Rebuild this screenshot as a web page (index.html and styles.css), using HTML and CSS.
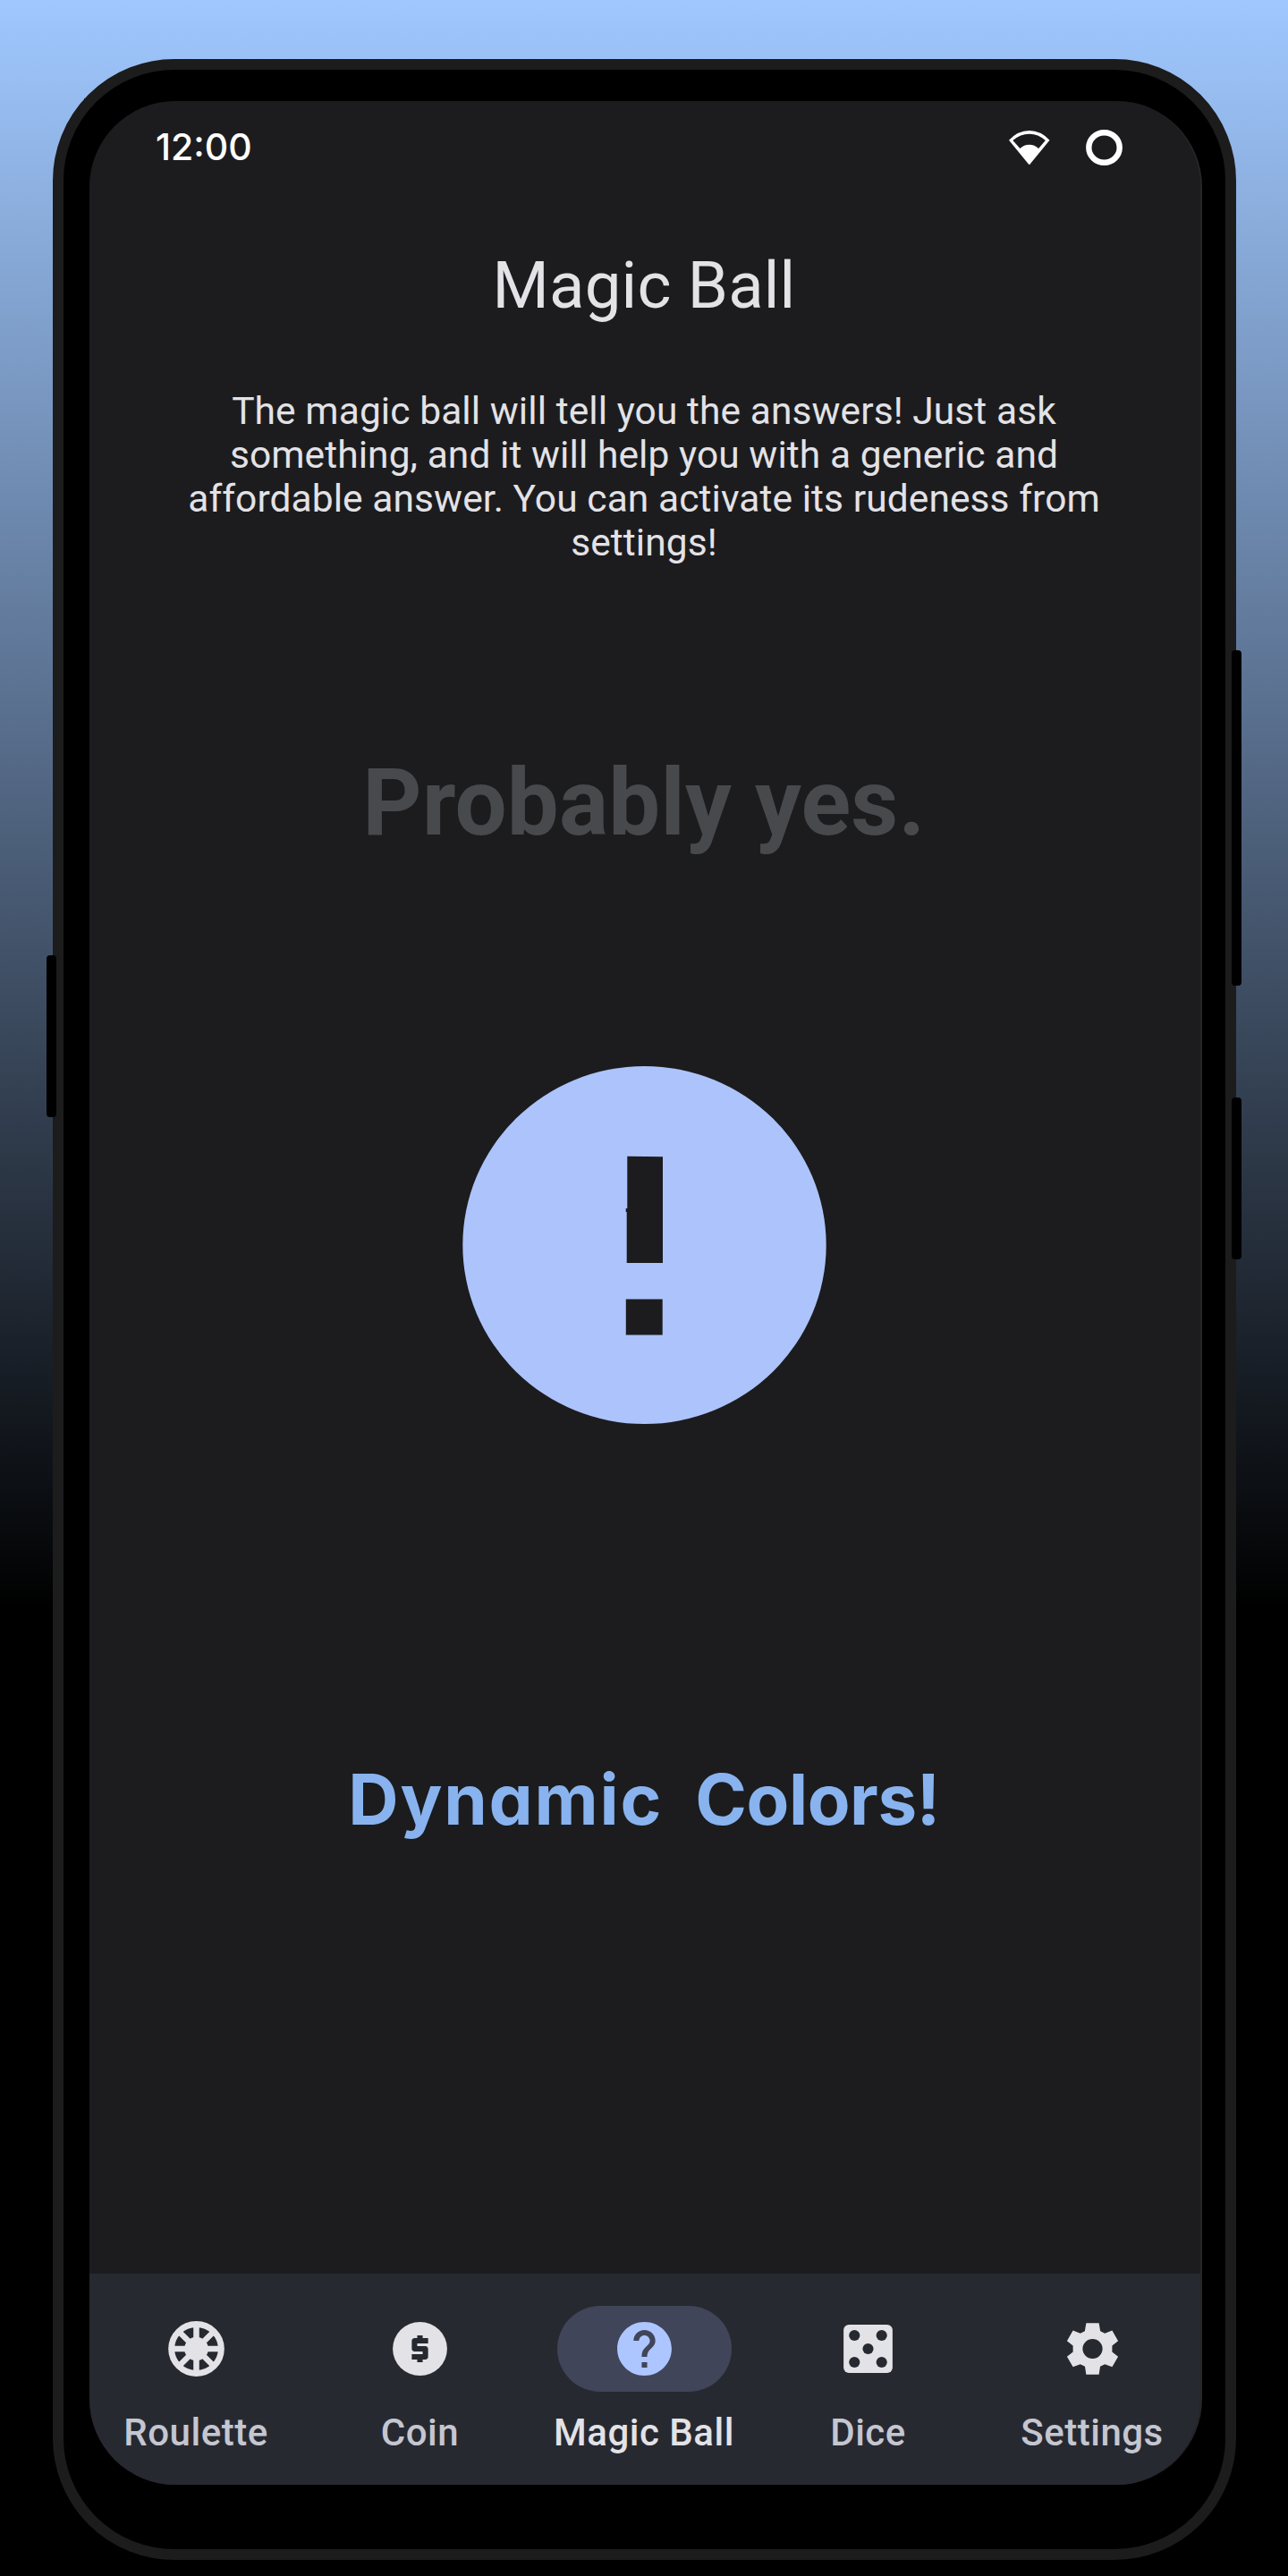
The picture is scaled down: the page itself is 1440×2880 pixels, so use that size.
FILE: index.html
```html
<!DOCTYPE html>
<html lang="en">
<head>
<meta charset="utf-8">
<title>Magic Ball</title>
<link rel="stylesheet" href="styles.css">
</head>
<body>
<div class="phone">
  <span class="key key-left"></span>
  <span class="key key-volume"></span>
  <span class="key key-power"></span>
  <div class="screen">
    <header class="status">
      <span class="clock">12:00</span>
      <div class="status-icons">
        <svg class="wifi" viewBox="0 0 136 115"><path fill="#fff" fill-rule="evenodd" d="M0 32Q30 0 68 0T136 32L68 115ZM13 33L37 60Q50 47 68 47T99 60L122 33Q98 11 68 11T13 33Z"/></svg>
        <svg class="ring" viewBox="0 0 41 40"><ellipse cx="20.5" cy="20" rx="17.2" ry="16.8" fill="none" stroke="#fff" stroke-width="6.4"/></svg>
      </div>
    </header>
    <main class="content">
      <h1 class="title">Magic Ball</h1>
      <p class="description">The magic ball will tell you the answers! Just ask<br>something, and it will help you with a generic and<br>affordable answer. You can activate its rudeness from<br>settings!</p>
      <p class="answer">Probably yes.</p>
      <svg class="ball" viewBox="0 0 407 400">
        <ellipse cx="203.5" cy="200" rx="203.2" ry="200" fill="#adc3fb"/>
        <path fill="#1c1c1e" d="M184.3 100.7L224 101.3V220H183.7V163H182.7V159H184.3ZM182.8 260.5H223.7V300.5H182.8Z"/>
      </svg>
      <p class="promo"><span class="promo-first">Dynamic</span><span class="promo-second">Colors!</span></p>
    </main>
    <nav class="tabs">
      <div class="tab">
        <span class="pill"><svg class="icon" viewBox="0 0 24 24" preserveAspectRatio="none"><g fill="none" stroke="#e3e2e6" stroke-width="2.15"><circle cx="12" cy="12" r="9.15" stroke-width="2.3"/><path d="M12 3V21M3 12H21M5.6 5.6L18.4 18.4M18.4 5.6L5.6 18.4"/></g><circle cx="12" cy="12" r="4.4" fill="#e3e2e6"/></svg></span>
        <span class="label">Roulette</span>
      </div>
      <div class="tab">
        <span class="pill"><svg class="icon" viewBox="0 0 24 24" preserveAspectRatio="none"><circle cx="12" cy="12" r="10" fill="#e3e2e6"/><path fill="#272930" d="M11 17h2v-1h1c.55 0 1-.45 1-1v-3c0-.55-.45-1-1-1h-3v-1h4V8h-2V7h-2v1h-1c-.55 0-1 .45-1 1v3c0 .55.45 1 1 1h3v1H9v2h2z"/></svg></span>
        <span class="label">Coin</span>
      </div>
      <div class="tab tab-active">
        <span class="pill"><svg class="icon" viewBox="0 0 24 24" preserveAspectRatio="none"><path fill="#adc6ff" d="M12 2C6.48 2 2 6.48 2 12s4.48 10 10 10 10-4.48 10-10S17.52 2 12 2zm1 17h-2v-2h2v2zm2.07-7.75l-.9.92C13.45 12.9 13 13.5 13 15h-2v-.5c0-1.1.45-2.1 1.17-2.83l1.24-1.26c.37-.36.59-.86.59-1.41 0-1.1-.9-2-2-2s-2 .9-2 2H8c0-2.21 1.79-4 4-4s4 1.79 4 4c0 .88-.36 1.68-.93 2.25z"/></svg></span>
        <span class="label">Magic Ball</span>
      </div>
      <div class="tab">
        <span class="pill"><svg class="icon" viewBox="0 0 24 24" preserveAspectRatio="none"><rect x="3" y="3" width="18" height="18" rx="2" fill="#e3e2e6"/><g fill="#272930"><circle cx="7" cy="7" r="2"/><circle cx="17" cy="7" r="2"/><circle cx="12" cy="12" r="2"/><circle cx="7" cy="17" r="2"/><circle cx="17" cy="17" r="2"/></g></svg></span>
        <span class="label">Dice</span>
      </div>
      <div class="tab">
        <span class="pill"><svg class="icon" viewBox="0 0 24 24" preserveAspectRatio="none"><path fill="#e3e2e6" fill-rule="evenodd" d="M9.65 2.4H14.35L14.85 5.4L16.5 6.25L19.2 5.2L21.4 9.1L19.2 10.8V13.2L21.4 14.9L19.2 18.75L16.5 17.75L14.8 18.6L14.35 21.6H9.65L9.2 18.6L7.5 17.75L4.8 18.75L2.6 14.9L4.8 13.2V10.8L2.6 9.1L4.8 5.2L7.5 6.25L9.15 5.4ZM12 8.35A3.65 3.65 0 1 0 12 15.65A3.65 3.65 0 1 0 12 8.35Z"/></svg></span>
        <span class="label">Settings</span>
      </div>
    </nav>
  </div>
</div>
</body>
</html>
```

FILE: styles.css
```css
* { box-sizing: border-box; }

body {
  margin: 0;
  height: 2880px;
  padding: 66px 58px 18px 59px;
  background: #000 linear-gradient(180deg, #a0c8ff 0, #000 1800px) no-repeat;
  font-family: Roboto, "Liberation Sans", sans-serif;
  isolation: isolate;
}

h1, p { margin: 0; font-weight: 400; }

.phone {
  position: relative;
  height: 2796px;
  padding: 35px 26.5px 72px 28.5px;
  border: 12px solid #1c1c1c;
  border-radius: 136px;
  background: #000;
}

/* Squared shoulders that show just past the rounded body */
.phone::before {
  content: "";
  position: absolute;
  z-index: -1;
  top: 32px;
  left: 23px;
  right: 24px;
  height: 60px;
  background: #1c1c1c;
}

.key {
  position: absolute;
  width: 11px;
  border-radius: 4px;
  background: #000;
}

.key-left { left: -19px; top: 990px; height: 181px; }
.key-volume { right: -18px; top: 649px; height: 375px; }
.key-power { right: -18px; top: 1149px; height: 181px; }

.screen {
  display: flex;
  flex-direction: column;
  height: 2665px;
  overflow: hidden;
  border-right: 2px solid #262628;
  border-radius: 96px;
  background: #1c1c1e;
}

.status {
  display: flex;
  align-items: center;
  justify-content: space-between;
  height: 104px;
  padding: 0 86.5px 0 74.5px;
  color: #fff;
}

.clock {
  margin-top: -2px;
  font: 500 41px/50px Inter, Roboto, sans-serif;
}

.status-icons { display: flex; align-items: center; gap: 40.5px; }
.wifi { width: 45.5px; height: 38.5px; }
.ring { width: 41px; height: 40px; }

.content {
  display: flex;
  flex: 1;
  flex-direction: column;
  align-items: center;
  padding: 61px 1px 0 0;
  color: #e3e2e6;
  text-align: center;
  white-space: nowrap;
}

.title { font-size: 72.5px; line-height: 84px; letter-spacing: .2px; }

.description {
  margin-top: 73px;
  font-size: 42.5px;
  line-height: 49px;
  letter-spacing: .08px;
}

.answer {
  margin-top: 207px;
  font-size: 103px;
  line-height: 120px;
  font-weight: 700;
  letter-spacing: .25px;
  color: #48494c;
}

.ball { width: 407px; height: 400px; margin-top: 234px; }

.promo {
  display: flex;
  gap: 36px;
  margin-top: 373px;
  font: 650 78px/94px Inter, Roboto, sans-serif;
  font-feature-settings: "cv11" 1;
  color: #88b3ef;
}

.promo-first { letter-spacing: 1.8px; }
.promo-second { letter-spacing: -.4px; }

.tabs {
  display: grid;
  grid-template-columns: repeat(5, 250.5px);
  justify-content: center;
  height: 236px;
  padding: 36px 1px 0 0;
  background: #272930;
}

.tab {
  display: flex;
  flex-direction: column;
  align-items: center;
  gap: 22px;
  color: #c4c6d0;
}

.pill {
  display: flex;
  align-items: center;
  justify-content: center;
  width: 195px;
  height: 96px;
  border-radius: 48px;
}

.icon { width: 73px; height: 72px; }

.label {
  font-size: 42px;
  line-height: 48px;
  font-weight: 500;
  letter-spacing: .5px;
}

.tab-active { color: #e3e2e6; }
.tab-active .pill { background: #404559; }
```
